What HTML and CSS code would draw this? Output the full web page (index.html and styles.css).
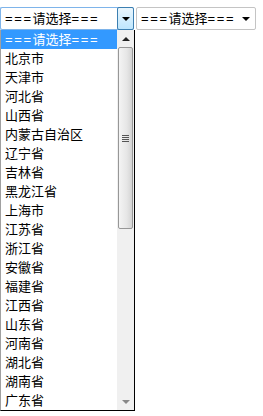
FILE: index.html
```html
<!DOCTYPE html>
<html lang="zh-CN">

<head>
    <meta charset="UTF-8">
    <meta name="viewport" content="width=device-width, initial-scale=1.0">
    <title>省市选择</title>
    <link rel="stylesheet" href="styles.css">
</head>

<body>
    <div class="row">
        <div class="select-wrap">
            <div class="select focused">
                <span class="value"><span class="eq">===</span>请选择<span class="eq">===</span></span>
                <span class="btn"><span class="arrow"></span></span>
            </div>
            <div class="dropdown">
                <ul class="list">
                    <li class="active"><span class="eq">===</span>请选择<span class="eq">===</span></li>
                    <li>北京市</li>
                    <li>天津市</li>
                    <li>河北省</li>
                    <li>山西省</li>
                    <li>内蒙古自治区</li>
                    <li>辽宁省</li>
                    <li>吉林省</li>
                    <li>黑龙江省</li>
                    <li>上海市</li>
                    <li>江苏省</li>
                    <li>浙江省</li>
                    <li>安徽省</li>
                    <li>福建省</li>
                    <li>江西省</li>
                    <li>山东省</li>
                    <li>河南省</li>
                    <li>湖北省</li>
                    <li>湖南省</li>
                    <li>广东省</li>
                </ul>
                <div class="scrollbar">
                    <div class="sb-btn"><span class="up"></span></div>
                    <div class="track">
                        <div class="thumb">
                            <div class="grip"><i></i><i></i><i></i><i></i></div>
                        </div>
                    </div>
                    <div class="sb-btn plain"><span class="down"></span></div>
                </div>
            </div>
        </div>
        <div class="select plain-select">
            <span class="value"><span class="eq">===</span>请选择<span class="eq">===</span></span>
            <span class="btn-plain"><span class="arrow"></span></span>
        </div>
    </div>
</body>

</html>
```

FILE: styles.css
```css
* {
    padding: 0;
    margin: 0;
    box-sizing: border-box;
}

body {
    background: #fff;
    padding-top: 7px;
    font-family: "Liberation Sans", "Noto Sans CJK SC", sans-serif;
    font-size: 13px;
    color: #000;
}

.row {
    display: flex;
    align-items: flex-start;
    gap: 1px;
}

.select-wrap {
    display: flex;
    flex-direction: column;
}

.eq {
    letter-spacing: 1.6px;
}

/* 下拉框 */
.select {
    height: 23px;
    display: flex;
    align-items: center;
    border: 1px solid #c4c4c4;
    border-radius: 2px;
    background: #fff;
}

.select .value {
    flex: 1;
    padding-left: 4px;
    white-space: nowrap;
    line-height: 19px;
}

.select.focused {
    width: 134px;
    border-color: #7eb4ea;
    border-right: none;
}

.btn {
    width: 17px;
    height: 23px;
    margin-top: -1px;
    margin-bottom: -1px;
    border: 1px solid #3c7fb1;
    border-radius: 2px;
    background: linear-gradient(#eaf6fd, #bee6fd);
    display: flex;
    align-items: center;
    justify-content: center;
}

.arrow {
    width: 0;
    height: 0;
    border-left: 4px solid transparent;
    border-right: 4px solid transparent;
    border-top: 4px solid #000;
}

.plain-select {
    width: 120px;
}

.btn-plain {
    width: 17px;
    display: flex;
    justify-content: center;
    margin-right: 1px;
}

/* 展开列表 */
.dropdown {
    width: 135px;
    display: flex;
    border: 1px solid #000;
    border-left-color: #a0a0a0;
    border-top: none;
    background: #fff;
}

.list {
    list-style: none;
    flex: 1;
}

.list li {
    height: 19px;
    line-height: 19px;
    padding-left: 4px;
    white-space: nowrap;
}

.list li.active {
    background-color: #3399ff;
    color: #fff;
}

.scrollbar {
    width: 17px;
    display: flex;
    flex-direction: column;
    background: #f0f0f0;
}

.sb-btn {
    height: 17px;
    display: flex;
    align-items: center;
    justify-content: center;
}

.up,
.down {
    width: 0;
    height: 0;
    border-left: 4px solid transparent;
    border-right: 4px solid transparent;
}

.up {
    border-bottom: 4px solid #222;
}

.down {
    border-top: 4px solid #888;
}

.track {
    flex: 1;
    padding: 0 1px;
}

.thumb {
    height: 182px;
    border: 1px solid #979797;
    border-radius: 2px;
    background: linear-gradient(to right, #f4f4f4, #e6e6e6 60%, #d4d4d4);
    display: flex;
    align-items: center;
    justify-content: center;
}

.grip {
    display: flex;
    flex-direction: column;
    gap: 1px;
}

.grip i {
    display: block;
    width: 7px;
    height: 1px;
    background: #555;
}
```
